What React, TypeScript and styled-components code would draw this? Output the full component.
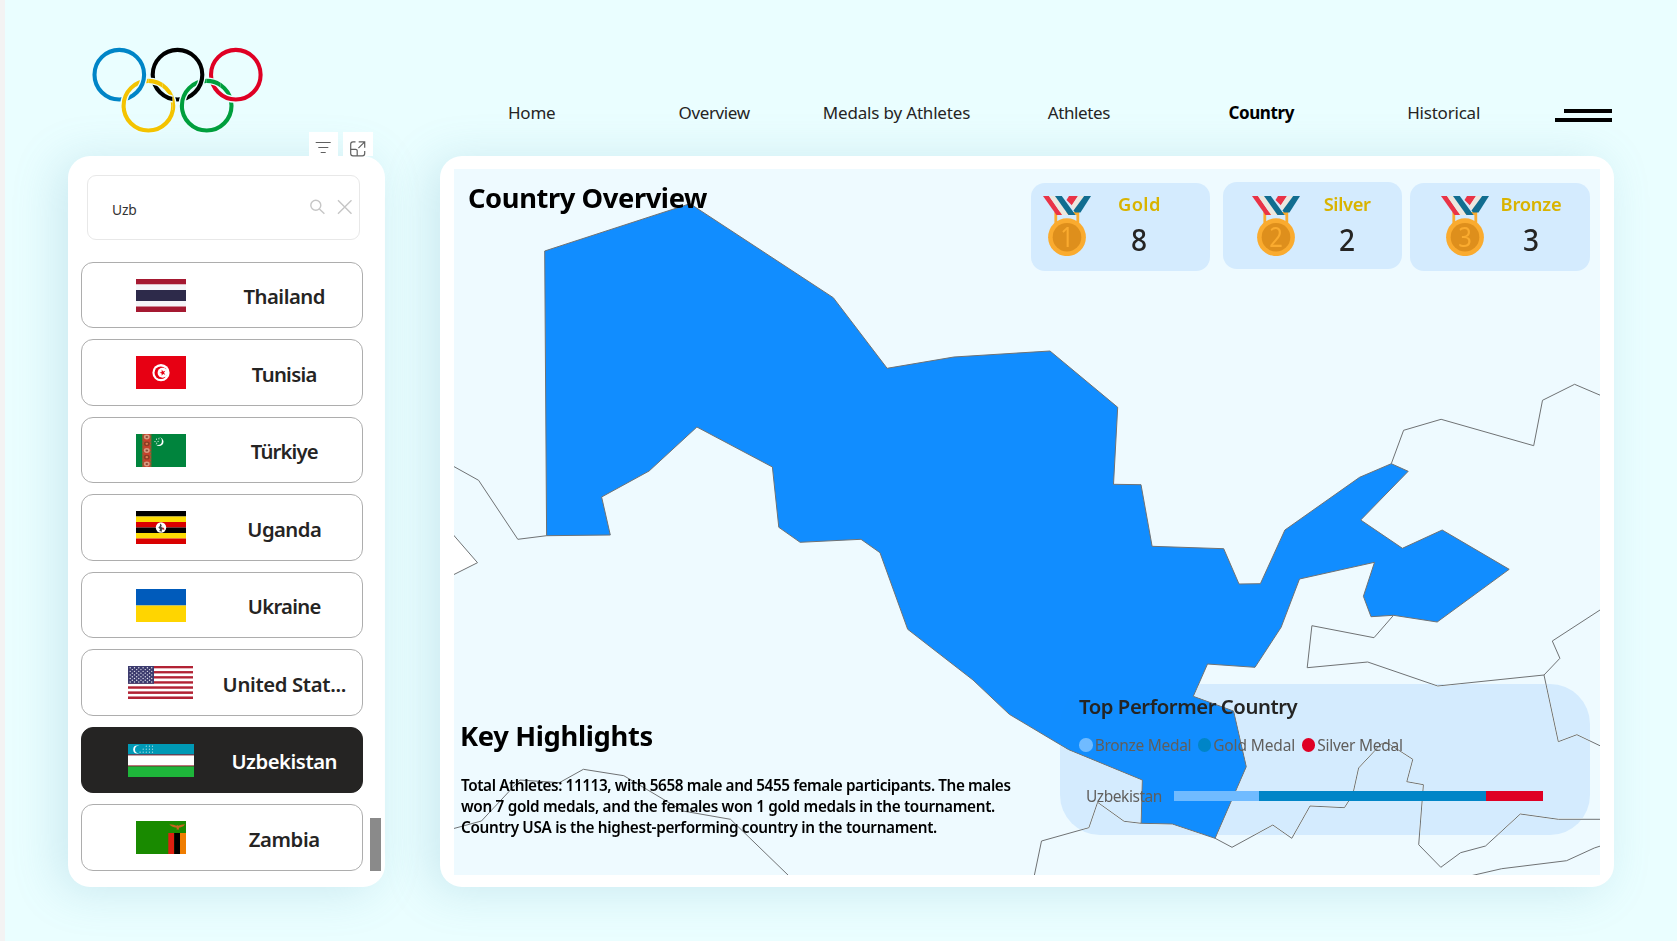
import React from "react";
import styled, { createGlobalStyle, css } from "styled-components";

const Global = createGlobalStyle`
  *, *::before, *::after { box-sizing: border-box; }
  body { margin: 0; background: #eafeff; }
`;

const FONT = `"Noto Sans", "Open Sans", sans-serif`;

const cardShadow = css`
  box-shadow: -10px 4px 46px rgba(90, 160, 185, 0.22);
`;

const Page = styled.div`
  width: 1677px;
  height: 941px;
  overflow: hidden;
  border-left: 5px solid #f3f3f3;
  padding: 0 63px;
  background: #eafeff;
  color: #252423;
  font-family: ${FONT};
  display: flex;
  flex-direction: column;
`;

/* ---------- header ---------- */

const Header = styled.header`
  position: relative;
  z-index: 1;
  flex: none;
  height: 156px;
  display: flex;
`;

const Brand = styled.div`
  width: 317px;
  margin-right: 55.5px;
  display: flex;
  flex-direction: column;
  justify-content: flex-end;
`;

const Rings = styled.svg`
  display: block;
  width: 176px;
  height: 90px;
  margin-left: 22px;
  overflow: visible;
`;

const Tools = styled.div`
  display: flex;
  gap: 5px;
  height: 24px;
  padding-left: 241px;
`;

const Tool = styled.button<{ $w: number }>`
  width: ${(p) => p.$w}px;
  height: 24px;
  border: 0;
  padding: 0;
  background: #fff;
  svg {
    display: block;
    overflow: visible;
  }
`;

const Nav = styled.nav`
  display: flex;
  align-items: center;
  height: 36px;
  margin-top: 94.5px;
`;

const NavLink = styled.a<{ $active?: boolean; $track: number }>`
  width: 182.4px;
  text-align: center;
  font-size: 17px;
  line-height: 36px;
  white-space: nowrap;
  letter-spacing: ${(p) => p.$track}px;
  font-weight: ${(p) => (p.$active ? 700 : 400)};
  color: ${(p) => (p.$active ? "#000" : "#252423")};
`;

const Burger = styled.div`
  display: flex;
  flex-direction: column;
  align-items: flex-end;
  gap: 5px;
  width: 56.5px;
  margin: 6px 0 0 20.5px;
`;

const BurgerBar = styled.span<{ $w: number }>`
  width: ${(p) => p.$w}px;
  height: 4px;
  background: #000;
`;

/* ---------- body ---------- */

const Body = styled.main`
  display: flex;
  gap: 55px;
  height: 731px;
`;

const Sidebar = styled.aside`
  width: 317px;
  padding: 19px 0 0;
  border-radius: 22px;
  background: #fff;
  ${cardShadow}
`;

const Search = styled.div`
  width: 273px;
  height: 65px;
  margin-left: 19px;
  padding: 0 7px 0 24px;
  border: 1px solid #e8e8e8;
  border-radius: 9px;
  display: flex;
  align-items: center;
`;

const Query = styled.span`
  flex: 1;
  padding-top: 4px;
  font-size: 13.8px;
  letter-spacing: -0.2px;
  color: #333;
`;

const SearchIcons = styled.svg`
  display: block;
  margin-top: -1px;
`;

const ListArea = styled.div`
  display: flex;
  align-items: flex-end;
  margin: 22px 4px 0 13px;
`;

const List = styled.ul`
  list-style: none;
  margin: 0;
  padding: 0;
  width: 282px;
  display: flex;
  flex-direction: column;
  gap: 11.2px;
`;

const Item = styled.li<{ $selected?: boolean }>`
  height: 66.3px;
  border: 1px solid ${(p) => (p.$selected ? "#252423" : "#adadad")};
  border-radius: 12px;
  padding: 0 13px 0 19.5px;
  display: flex;
  align-items: center;
  background: ${(p) => (p.$selected ? "#252423" : "#fff")};
  color: ${(p) => (p.$selected ? "#fff" : "#252423")};
`;

const FlagCell = styled.span`
  width: 118px;
  display: flex;
  justify-content: center;
  svg {
    display: block;
  }
`;

const Name = styled.span<{ $track: number }>`
  flex: 1;
  padding-top: 2px;
  text-align: center;
  white-space: nowrap;
  font-size: 20.3px;
  font-weight: 600;
  letter-spacing: ${(p) => p.$track}px;
`;

const Thumb = styled.div`
  width: 11px;
  height: 53px;
  margin-left: 7px;
  background: #8a8a8a;
`;

const MapCard = styled.section`
  width: 1174px;
  padding: 13px 14px 12px;
  border-radius: 22px;
  background: #fff;
  ${cardShadow}
`;

const Stage = styled.div`
  position: relative;
  isolation: isolate;
  height: 706px;
  background: #eefaff;
  display: flex;
  flex-direction: column;
  justify-content: space-between;
`;

const MapSvg = styled.svg`
  position: absolute;
  inset: 0;
  z-index: -1;
`;

const TopRow = styled.div`
  display: flex;
  align-items: flex-start;
  padding: 13px 10.5px 0 14px;
`;

const Title = styled.h1<{ $track: number }>`
  margin: 0;
  font-size: 27.3px;
  line-height: 32px;
  font-weight: 700;
  color: #000;
  white-space: nowrap;
  letter-spacing: ${(p) => p.$track}px;
`;

const Medals = styled.div`
  display: flex;
  margin: 1px 0 0 auto;
`;

const MedalCard = styled.div<{ $inset: number; $gap: number; $before: number; $lift: number }>`
  width: 179.5px;
  height: 87.5px;
  margin-left: ${(p) => p.$before}px;
  margin-top: ${(p) => -p.$lift}px;
  padding: ${(p) => 13 + p.$lift}px 0 0 ${(p) => p.$inset}px;
  border-radius: 14px;
  background: #d4ebfe;
  display: flex;
  align-items: flex-start;
  gap: ${(p) => p.$gap}px;
`;

const MedalText = styled.div`
  width: 80px;
  margin-top: -4.5px;
  text-align: center;
`;

const MedalLabel = styled.div<{ $track: number }>`
  font-size: 18.3px;
  line-height: 24px;
  font-weight: 600;
  color: #d9b300;
  letter-spacing: ${(p) => p.$track}px;
`;

const MedalValue = styled.div`
  margin-top: 5.5px;
  font-size: 30.5px;
  line-height: 36px;
  font-weight: 500;
  color: #252423;
  transform: scaleX(0.92);
`;

const MedalNumber = styled.text`
  font-family: ${FONT};
  font-size: 27px;
  fill: #faab2f;
  text-anchor: middle;
`;

const BottomRow = styled.div`
  display: flex;
  justify-content: space-between;
  align-items: flex-start;
  height: 191px;
  padding: 0 10px 0 7px;
`;

const Highlights = styled.div`
  padding-top: 36px;
`;

const SubTitle = styled(Title)`
  margin-left: -1px;
`;

const Story = styled.p`
  margin: 22.5px 0 0;
  font-size: 15.3px;
  line-height: 21.1px;
  font-weight: 600;
  color: #000;
`;

const StoryLine = styled.span<{ $track: number }>`
  display: block;
  white-space: nowrap;
  letter-spacing: ${(p) => p.$track}px;
`;

const Panel = styled.div`
  position: relative;
  width: 530px;
  height: 151px;
  padding: 8px 47px 0 19px;
`;

const PanelTint = styled.div`
  position: absolute;
  inset: 0;
  z-index: -1;
  border-radius: 40px;
  background: #d4ebfe;
  mix-blend-mode: darken;
`;

const PanelTitle = styled.h2`
  margin: 0;
  font-size: 20.3px;
  line-height: 28px;
  font-weight: 600;
  letter-spacing: -0.44px;
  color: #252423;
`;

const Legend = styled.div`
  display: flex;
  margin-top: 13px;
`;

const LegendItem = styled.span<{ $track: number; $w: number }>`
  display: flex;
  align-items: center;
  width: ${(p) => p.$w}px;
  font-size: 15.5px;
  line-height: 24px;
  white-space: nowrap;
  color: #605e5c;
  letter-spacing: ${(p) => p.$track}px;
`;

const Dot = styled.i<{ $c: string }>`
  flex: none;
  width: 13.5px;
  height: 13.5px;
  margin-right: 2.2px;
  border-radius: 50%;
  background: ${(p) => p.$c};
`;

const ChartRow = styled.div`
  display: flex;
  align-items: center;
  justify-content: flex-end;
  margin-top: 27px;
`;

const ChartLabel = styled.span`
  font-size: 15.5px;
  line-height: 24px;
  letter-spacing: -0.44px;
  color: #605e5c;
  margin-right: 12px;
`;

const Track = styled.div`
  display: flex;
  width: 369px;
  height: 10px;
`;

const Segment = styled.div<{ $n: number; $c: string }>`
  flex: ${(p) => p.$n};
  background: ${(p) => p.$c};
`;

/* ---------- drawings ---------- */

const RING_BG = "#eafeff";

function Ring({ x, y, c }: { x: number; y: number; c: string }) {
  return (
    <g fill="none">
      <circle cx={x} cy={y} r="24.8" stroke={RING_BG} strokeWidth="6.8" />
      <circle cx={x} cy={y} r="24.8" stroke={c} strokeWidth="4.1" />
    </g>
  );
}

function OlympicRings() {
  const lower = (
    <>
      <Ring x={148.4} y={105.7} c="#f4c300" />
      <Ring x={206.7} y={105.7} c="#009f3d" />
    </>
  );
  return (
    <Rings viewBox="90 42 176 90" aria-label="Olympic rings">
      <defs>
        <clipPath id="over">
          <rect x="114" y="90" width="22" height="18" />
          <rect x="148.4" y="72" width="14" height="18" />
          <rect x="172.6" y="92" width="20" height="18" />
          <rect x="206.6" y="72" width="14" height="18" />
        </clipPath>
      </defs>
      {lower}
      <Ring x={119.3} y={74.7} c="#0085c7" />
      <Ring x={177.5} y={74.7} c="#000" />
      <Ring x={235.8} y={74.7} c="#df0024" />
      <g clipPath="url(#over)">{lower}</g>
    </Rings>
  );
}

function Medal({ n }: { n: string }) {
  return (
    <svg width="48" height="60" viewBox="0 0 48 60">
      <path d="M12.8 28V17.5H34.8V28" fill="none" stroke="#faab2f" strokeWidth="2.8" />
      <path d="M26 0H35L29 9.5L23.5 4Z" fill="#e93347" />
      <path d="M35 0H41.2L31 15.5L28.2 10Z" fill="#ece8df" />
      <path d="M41.2 0H48L37.5 16.5H32L30.5 14.5Z" fill="#116d90" />
      <path d="M0 0H6L19.2 19H13.5Z" fill="#e93347" />
      <path d="M6 0H12L25.5 19H19.2Z" fill="#ece8df" />
      <path d="M12 0H18.8L32.5 19H25.5Z" fill="#116d90" />
      <circle cx="24" cy="41.2" r="18.9" fill="#faab2f" />
      <circle cx="24" cy="41.2" r="14.3" fill="#de8f1c" />
      <g transform="translate(24 50.8) scale(.88 1)">
        <MedalNumber>{n}</MedalNumber>
      </g>
    </svg>
  );
}

function Bands({ rows, w = 50 }: { rows: [number, string][]; w?: number }) {
  let y = 0;
  return (
    <>
      {rows.map(([h, c], i) => {
        const r = <rect key={i} x="0" y={y} width={w} height={h + 0.05} fill={c} />;
        y += h;
        return r;
      })}
    </>
  );
}

const flagArt: Record<string, { w: number; art: React.ReactNode }> = {
  th: {
    w: 50,
    art: <Bands rows={[[5.5, "#a51931"], [5.5, "#f4f5f8"], [11, "#2d2a4a"], [5.5, "#f4f5f8"], [5.5, "#a51931"]]} />,
  },
  tn: {
    w: 50,
    art: (
      <>
        <rect width="50" height="33" fill="#e70013" />
        <circle cx="25" cy="16.7" r="8.6" fill="#fff" />
        <circle cx="24.8" cy="16.7" r="6.3" fill="#e70013" />
        <circle cx="26.6" cy="16.7" r="5" fill="#fff" />
        <path d="M23.6 16.7l2.1-.8v-2.3l1.4 1.8 2.2-.7-1.3 2 1.3 2-2.2-.7-1.4 1.8v-2.3z" fill="#e70013" />
      </>
    ),
  },
  tm: {
    w: 50,
    art: (
      <>
        <rect width="50" height="33" fill="#00843d" />
        <rect x="6.3" width="9" height="33" fill="#c4432d" />
        <path d="M7 0v33M14.6 0v33" stroke="#5f7a3d" strokeWidth="1" strokeDasharray="2 1.4" />
        {[3, 9.8, 16.5, 23.2, 30].map((y, i) => (
          <g key={y}>
            <ellipse cx="10.8" cy={y} rx="2.9" ry="2.4" fill={i % 2 ? "#8b3b25" : "#d99b80"} />
            <ellipse cx="10.8" cy={y} rx="1.3" ry="1.1" fill={i % 2 ? "#d8804f" : "#8a4a35"} />
          </g>
        ))}
        <circle cx="23.2" cy="7.8" r="4.3" fill="#fff" />
        <circle cx="21.8" cy="7" r="4.1" fill="#00843d" />
        <path d="M18.5 7.6h1M20 5.2h1M21.6 7.4h1M20.2 9.2h1M22.4 4.8h1" stroke="#fff" strokeWidth="1" />
      </>
    ),
  },
  ug: {
    w: 50,
    art: (
      <>
        <Bands rows={[[5.5, "#000"], [5.5, "#fcdc04"], [5.5, "#d90000"], [5.5, "#000"], [5.5, "#fcdc04"], [5.5, "#d90000"]]} />
        <circle cx="25" cy="16.5" r="5.2" fill="#fff" />
        <path d="M24 12.5l1.8 1.4-.6 1.8 2.4 2.4-1.8.6.2 2-2.8-.6.9-1.8-1.8-1.8 1.6-1.5z" fill="#444" />
        <path d="M26.4 15.6l2.2 2.6-1.4.6z" fill="#d90000" />
      </>
    ),
  },
  ua: { w: 50, art: <Bands rows={[[16.5, "#005bbb"], [16.5, "#ffd500"]]} /> },
  us: {
    w: 65,
    art: (
      <>
        <Bands w={65} rows={Array.from({ length: 13 }, (_, i): [number, string] => [33 / 13, i % 2 ? "#fff" : "#b22234"])} />
        <rect width="26" height="17.8" fill="#3c3b6e" />
        {Array.from({ length: 9 }, (_, r) =>
          Array.from({ length: r % 2 ? 5 : 6 }, (_, c) => (
            <circle key={`${r}-${c}`} cx={2.2 + c * 4.3 + (r % 2 ? 2.15 : 0)} cy={1.8 + r * 1.78} r=".7" fill="#e6e6ef" />
          ))
        )}
      </>
    ),
  },
  uz: {
    w: 66,
    art: (
      <>
        <Bands w={66} rows={[[10.6, "#0099b5"], [0.8, "#ce1126"], [10.2, "#fff"], [0.8, "#ce1126"], [10.6, "#1eb53a"]]} />
        <circle cx="9.2" cy="5.600" r="4" fill="#fff" />
        <circle cx="10.800" cy="5.600" r="3.800" fill="#0099b5" />
        {[2.2, 5.2, 8.2].map((y, r) =>
          Array.from({ length: 3 + r }, (_, c) => (
            <circle key={`${y}-${c}`} cx={24.5 - c * 3.1} cy={y} r=".6" fill="#b5e2ea" />
          ))
        )}
      </>
    ),
  },
  zm: {
    w: 50,
    art: (
      <>
        <rect width="50" height="33" fill="#198a00" />
        <rect x="32.3" y="12" width="6" height="21" fill="#de2010" />
        <rect x="38.2" y="12" width="6" height="21" fill="#000" />
        <rect x="44" y="12" width="6" height="21" fill="#ef7d00" />
        <path d="M33.4 3.2q4.6.4 7 1.5l.8-.8 1 .8q3-1.2 6.6-1.5-.6 2.2-4.6 3.2l-1.4.4.3 1.8h-2.6l.3-1.8q-5.8-1-7.4-3.6z" fill="#c8641e" />
      </>
    ),
  },
};

function Flag({ code }: { code: string }) {
  const { w, art } = flagArt[code];
  return (
    <svg width={w} height="33" viewBox={`0 0 ${w} 33`}>
      {art}
    </svg>
  );
}

const uzbekistan =
  "544.7,251 690,203.7 833.3,297.7 887.1,368.3 953.9,357 1050,351 1117.7,407.3 1113.5,484.3 1141,484.7 1152.1,546.3 1223.7,548.7 1239,584 1260.4,583.7 1284.9,530 1359.6,477.3 1391.3,463.7 1408.2,471.3 1360.7,520 1402.4,548.3 1442.2,530 1509.2,569.3 1437.2,622 1393.5,615.3 1371,616.7 1363.4,596.3 1374.5,562.3 1299.5,579 1281.1,627.3 1255,667.3 1207.5,664 1193.3,696.3 1233.6,711 1246.3,766.7 1215.1,838.3 1172.3,824 1141.1,823.3 1142.3,780 1068.7,749.7 1009.3,714.3 973,680 907.7,629.3 880,552.7 861,539.3 800.1,542.3 778.8,527.3 772.4,467 696.9,427 649.1,471 601.6,497 610.3,535 546.6,535.7";

const borders = [
  "452,465.5 478.6,480.3 517.8,539.3 546.6,535.7",
  "1391.3,463.7 1403.6,430.3 1441.1,419.3 1533.7,445.7 1542.5,400.3 1574.6,384.3 1602,396",
  "1393.5,615.3 1374,637.7 1311.9,625.7 1307.2,667.7 1367.7,662 1437.7,686 1544,675 1559.9,658.3 1552.3,641 1602,608.7",
  "1544,675 1558.3,741.7 1576.9,734.7 1602,746.7",
  "1034,877 1041.5,841 1088.9,827.7 1097.6,802.3 1124.1,821.3 1141,823.3",
  "1215.1,838.3 1232,847.3 1272.8,825 1291.8,838.3 1310,806 1344.4,807.7 1350,799 1353.4,791.7 1358.6,768 1381,744 1388,743.3 1412.8,759.3 1406.8,781.7 1423.4,784.7 1418.7,844.7 1440.8,867.3 1460.6,852.7 1485.5,846 1520.3,814 1558.3,819.3 1602,819.3",
  "1470,876 1501.7,868.7 1566.6,860.7 1594.3,848 1602,845.5",
  "452,829 481.4,821 519.8,780 559.3,782.7 583.4,769.3 623.8,775.7 683,811 730.5,819.3 789,876",
];

function CountryMap() {
  return (
    <MapSvg width="1146" height="706" viewBox="454 169 1146 706">
      <g fill="none" stroke="#6f7274" strokeWidth="1">
        {borders.map((b) => (
          <polyline key={b} points={b} />
        ))}
        <polygon points="450,531 477.5,562.7 450,576.5" fill="#fff" />
        <polygon points={uzbekistan} fill="#118dff" />
      </g>
    </MapSvg>
  );
}

/* ---------- data ---------- */

const nav = [
  { label: "Home", track: -0.2 },
  { label: "Overview", track: -0.38 },
  { label: "Medals by Athletes", track: -0.18 },
  { label: "Athletes", track: -0.38 },
  { label: "Country", track: -0.4, active: true },
  { label: "Historical", track: -0.22 },
];

const countries = [
  { code: "th", name: "Thailand", track: -0.45 },
  { code: "tn", name: "Tunisia", track: -0.7 },
  { code: "tm", name: "Türkiye", track: -0.85 },
  { code: "ug", name: "Uganda", track: -0.55 },
  { code: "ua", name: "Ukraine", track: -0.7 },
  { code: "us", name: "United Stat...", track: -0.35 },
  { code: "uz", name: "Uzbekistan", track: -0.46, selected: true },
  { code: "zm", name: "Zambia", track: -0.4 },
];

const medals = [
  { n: "1", label: "Gold", value: 8, inset: 12.2, gap: 8.4, before: 0, lift: 0, track: 0.4 },
  { n: "2", label: "Silver", value: 2, inset: 29.3, gap: 7.1, before: 12.4, lift: 1.2, track: -0.35 },
  { n: "3", label: "Bronze", value: 3, inset: 30.5, gap: 2.500, before: 7.8, lift: 0, track: -0.22 },
];

const story = [
  { text: "Total Athletes: 11113, with 5658 male and 5455 female participants. The males", track: -0.4 },
  { text: "won 7 gold medals, and the females won 1 gold medals in the tournament.", track: -0.325 },
  { text: "Country USA is the highest-performing country in the tournament.", track: -0.32 },
];

const series = [
  { label: "Bronze Medal", color: "#70bbff", n: 3, w: 118.5, track: -0.3 },
  { label: "Gold Medal", color: "#0085c7", n: 8, w: 104, track: -0.13 },
  { label: "Silver Medal", color: "#df0024", n: 2, w: 102, track: -0.25 },
];

export default function App() {
  return (
    <Page>
      <Global />
      <Header>
        <Brand>
          <OlympicRings />
          <Tools>
            <Tool $w={29} aria-label="Filters">
              <svg width="29" height="24" stroke="#606060" strokeWidth="1.2">
                <path d="M6.7 10.5h15M9.3 15.5h10M11.7 20.5h5" />
              </svg>
            </Tool>
            <Tool $w={30} aria-label="Focus mode">
              <svg width="30" height="24" fill="none" stroke="#606060" strokeWidth="1.2">
                <path d="M12.5 9.8H10a2.3 2.3 0 0 0-2.3 2.3v9.4a2.3 2.3 0 0 0 2.3 2.3h9.4a2.3 2.3 0 0 0 2.3-2.3V19" />
                <path d="M7.7 17.3h5a1.5 1.5 0 0 1 1.5 1.5v5M15.7 9.8h6v6M21.7 9.8l-6.3 6.3" />
              </svg>
            </Tool>
          </Tools>
        </Brand>
        <Nav>
          {nav.map((n) => (
            <NavLink key={n.label} $active={n.active} $track={n.track}>
              {n.label}
            </NavLink>
          ))}
          <Burger>
            <BurgerBar $w={48} />
            <BurgerBar $w={56.5} />
          </Burger>
        </Nav>
      </Header>
      <Body>
        <Sidebar>
          <Search>
            <Query>Uzb</Query>
            <SearchIcons width="42" height="16" fill="none" stroke="#c6c6c6" strokeWidth="1.4">
              <circle cx="5.8" cy="6.3" r="5" />
              <path d="M9.4 10l5 4.8M28 1.2L41.5 14.8M41.5 1.2L28 14.8" />
            </SearchIcons>
          </Search>
          <ListArea>
            <List>
              {countries.map((c) => (
                <Item key={c.code} $selected={c.selected}>
                  <FlagCell>
                    <Flag code={c.code} />
                  </FlagCell>
                  <Name $track={c.track}>{c.name}</Name>
                </Item>
              ))}
            </List>
            <Thumb />
          </ListArea>
        </Sidebar>
        <MapCard>
          <Stage>
            <CountryMap />
            <TopRow>
              <Title $track={-0.4}>Country Overview</Title>
              <Medals>
                {medals.map((m) => (
                  <MedalCard key={m.label} $inset={m.inset} $gap={m.gap} $before={m.before} $lift={m.lift}>
                    <Medal n={m.n} />
                    <MedalText>
                      <MedalLabel $track={m.track}>{m.label}</MedalLabel>
                      <MedalValue>{m.value}</MedalValue>
                    </MedalText>
                  </MedalCard>
                ))}
              </Medals>
            </TopRow>
            <BottomRow>
              <Highlights>
                <SubTitle as="h2" $track={-0.33}>
                  Key Highlights
                </SubTitle>
                <Story>
                  {story.map((s) => (
                    <StoryLine key={s.text} $track={s.track}>
                      {s.text}
                    </StoryLine>
                  ))}
                </Story>
              </Highlights>
              <Panel>
                <PanelTint />
                <PanelTitle>Top Performer Country</PanelTitle>
                <Legend>
                  {series.map((s) => (
                    <LegendItem key={s.label} $track={s.track} $w={s.w}>
                      <Dot $c={s.color} />
                      {s.label}
                    </LegendItem>
                  ))}
                </Legend>
                <ChartRow>
                  <ChartLabel>Uzbekistan</ChartLabel>
                  <Track>
                    {series.map((s) => (
                      <Segment key={s.label} $n={s.n} $c={s.color} />
                    ))}
                  </Track>
                </ChartRow>
              </Panel>
            </BottomRow>
          </Stage>
        </MapCard>
      </Body>
    </Page>
  );
}
